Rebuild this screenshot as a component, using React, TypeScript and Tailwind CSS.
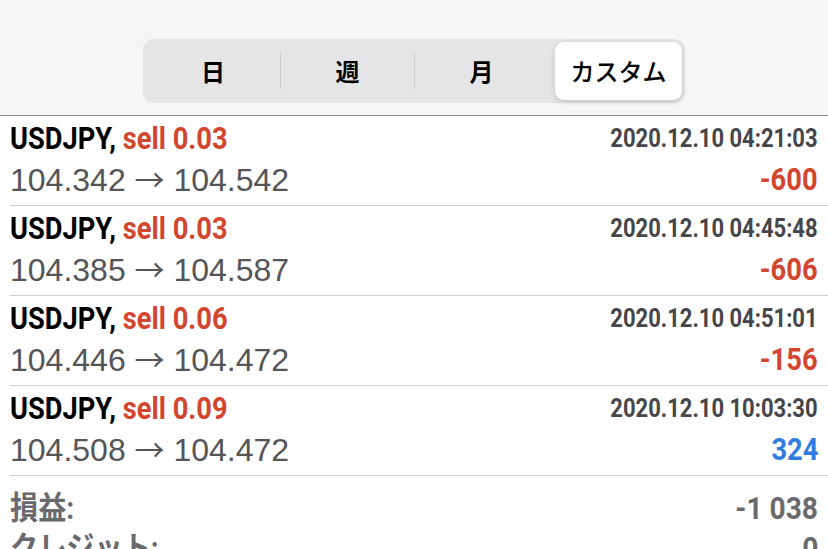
import type { ReactNode } from 'react'

const trades = [
  { pair: 'USDJPY', side: 'sell 0.03', time: '2020.12.10 04:21:03', open: '104.342', close: '104.542', profit: '-600' },
  { pair: 'USDJPY', side: 'sell 0.03', time: '2020.12.10 04:45:48', open: '104.385', close: '104.587', profit: '-606' },
  { pair: 'USDJPY', side: 'sell 0.06', time: '2020.12.10 04:51:01', open: '104.446', close: '104.472', profit: '-156' },
  { pair: 'USDJPY', side: 'sell 0.09', time: '2020.12.10 10:03:30', open: '104.508', close: '104.472', profit: '324' },
]

// condensed bold look: Roboto squeezed horizontally
function Cond({ children, right, className = '' }: { children: ReactNode; right?: boolean; className?: string }) {
  return (
    <span
      className={
        "inline-block whitespace-nowrap font-['Roboto','Noto_Sans_CJK_JP',sans-serif] font-bold " +
        (right ? 'origin-right scale-x-[0.88] ' : 'origin-left scale-x-[0.88] ') +
        className
      }
    >
      {children}
    </span>
  )
}

function Segmented() {
  const tabs = ['日', '週', '月', 'カスタム']
  return (
    <div className="flex h-[64px] w-[542px] items-center rounded-[11px] bg-[#e5e5e7] p-[3px]">
      {tabs.map((t, i) => {
        const active = i === tabs.length - 1
        return (
          <div key={t} className="flex h-full flex-1 items-center">
            {i > 0 && !active && <div className="h-[36px] w-px bg-[#cdcdd0]" />}
            <div
              className={
                "flex h-full flex-1 items-center justify-center font-['Noto_Sans_CJK_JP',sans-serif] text-[24px] text-black " +
                (active ? 'ml-[7px] rounded-[9px] bg-white font-medium shadow-[0_2px_6px_rgba(0,0,0,0.15)]' : 'font-bold')
              }
            >
              {t}
            </div>
          </div>
        )
      })}
    </div>
  )
}

function TradeRow({ t }: { t: (typeof trades)[number] }) {
  const loss = t.profit.startsWith('-')
  return (
    <div className="ml-[10px] flex h-[90px] flex-col border-b border-[#cfcfd1] pt-[3px] pr-[10px]">
      <div className="flex h-[40px] items-center justify-between">
        <Cond className="text-[31px]">
          <span className="text-black">{t.pair}, </span>
          <span className="text-[#d2462f]">{t.side}</span>
        </Cond>
        <Cond right className="text-[25px] text-[#45454a]">
          {t.time}
        </Cond>
      </div>
      <div className="flex h-[42px] items-center justify-between">
        <div className="font-['Liberation_Sans',sans-serif] text-[32px] text-[#555558]">
          {t.open} <span className="font-['Noto_Sans_CJK_JP',sans-serif] text-[30px]">→</span> {t.close}
        </div>
        <Cond right className={`text-[31px] ${loss ? 'text-[#d2462f]' : 'text-[#2f7de1]'}`}>
          {t.profit}
        </Cond>
      </div>
    </div>
  )
}

export default function App() {
  return (
    <div className="h-[549px] w-[828px] overflow-hidden bg-white font-['Liberation_Sans','Noto_Sans_CJK_JP',sans-serif]">
      <div className="flex h-[116px] items-center justify-center border-b border-[#8e8e91] bg-[#f6f6f6] pt-[26px]">
        <Segmented />
      </div>
      {trades.map((t, i) => (
        <TradeRow key={i} t={t} />
      ))}
      <div className="px-[10px] pt-[12px] text-[32px] text-[#6a6a6e]">
        <div className="flex h-[40px] items-center justify-between">
          <Cond>損益:</Cond>
          <Cond right>-1 038</Cond>
        </div>
        <div className="flex h-[40px] items-center justify-between">
          <Cond>クレジット:</Cond>
          <Cond right>0</Cond>
        </div>
      </div>
    </div>
  )
}
